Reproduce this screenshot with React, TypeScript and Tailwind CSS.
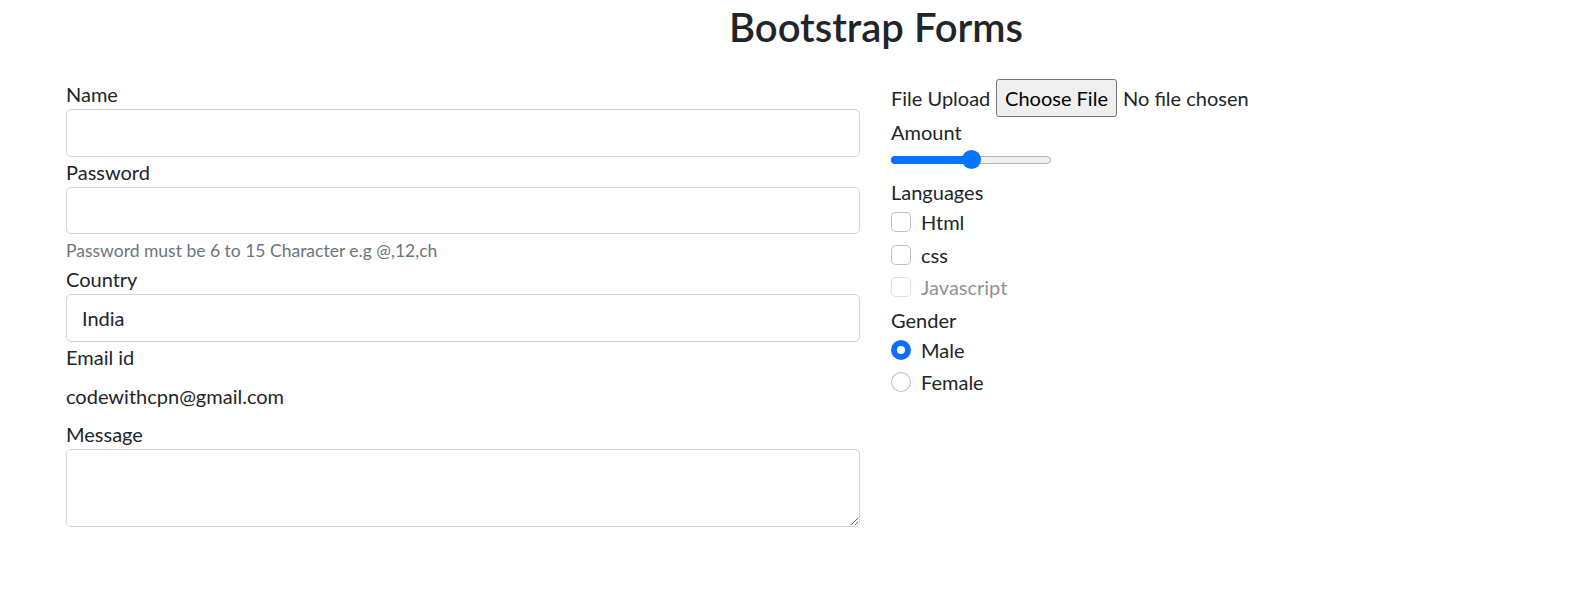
import React from "react";

function Checkbox({ label, disabled }: { label: string; disabled?: boolean }) {
  return (
    <div className={`flex h-[32.5px] ${disabled ? "opacity-50" : ""}`}>
      <div className="mt-[5px] h-[20px] w-[20px] shrink-0 rounded-[5px] border border-[rgba(0,0,0,0.25)] bg-white" />
      <span className="ml-[10px] h-[30px]">{label}</span>
    </div>
  );
}

function Radio({ label, checked }: { label: string; checked?: boolean }) {
  return (
    <div className="flex h-[32.5px]">
      {checked ? (
        <div className="mt-[5px] flex h-[20px] w-[20px] shrink-0 items-center justify-center rounded-full bg-[#0d6efd]">
          <div className="h-[8px] w-[8px] rounded-full bg-white" />
        </div>
      ) : (
        <div className="mt-[5px] h-[20px] w-[20px] shrink-0 rounded-full border border-[rgba(0,0,0,0.25)] bg-white" />
      )}
      <span className="ml-[10px] h-[30px]">{label}</span>
    </div>
  );
}

export default function App() {
  return (
    <div className="h-[612px] w-[1577px] overflow-hidden bg-white font-['Lato','Open_Sans',sans-serif] text-[20px] leading-[30px] text-[#212529]">
      <h2 className="pb-[28px] pl-[175px] pt-[3px] text-center text-[40px] font-semibold leading-[48px]">
        Bootstrap Forms
      </h2>
      <div className="flex gap-[31px] pl-[66px]">
        {/* Left column */}
        <div className="flex w-[794px] flex-col">
          <label className="block h-[30px]">Name</label>
          <input
            type="text"
            className="block h-[48px] w-full rounded-[5px] border border-[#ced4da] bg-white px-[15px] outline-none"
          />
          <label className="block h-[30px]">Password</label>
          <input
            type="password"
            className="block h-[47px] w-full rounded-[5px] border border-[#ced4da] bg-white px-[15px] outline-none"
          />
          <div className="mt-[4px] h-[26px] text-[17.5px] leading-[26px] text-[#6c757d]">
            Password must be 6 to 15 Character e.g @,12,ch
          </div>
          <label className="block h-[30px]">Country</label>
          <div className="flex h-[48px] w-full items-center rounded-[5px] border border-[#ced4da] bg-white px-[15px]">
            India
          </div>
          <label className="block h-[30px]">Email id</label>
          <div className="h-[47px] pt-[9px]">codewithcpn@gmail.com</div>
          <label className="block h-[30px]">Message</label>
          <textarea
            rows={2}
            className="block h-[78px] w-full rounded-[5px] border border-[#ced4da] bg-white px-[15px] py-[7px] outline-none"
          />
        </div>

        {/* Right column */}
        <div className="flex w-[400px] flex-col">
          <div className="flex h-[38px] items-center">
            <span className="w-[105px] shrink-0">File Upload</span>
            <button
              type="button"
              className="flex h-[38px] w-[121px] items-center justify-center rounded-[3px] border border-[#767676] bg-[#efefef] text-[20px] text-[#000000]"
            >
              Choose File
            </button>
            <span className="ml-[6px]">No file chosen</span>
          </div>
          <label className="block h-[30px]">Amount</label>
          <div className="relative mt-[3px] h-[20px] w-[160px]">
            <div className="absolute left-0 right-0 top-[6px] h-[8px] rounded-full border border-[#b2b2b2] bg-[#efefef]" />
            <div className="absolute left-0 top-[6px] h-[8px] w-[80px] rounded-l-full bg-[#0075ff]" />
            <div className="absolute left-[71px] top-0 h-[19px] w-[19px] rounded-full bg-[#0075ff]" />
          </div>
          <label className="mt-[7px] block h-[30px]">Languages</label>
          <Checkbox label="Html" />
          <Checkbox label="css" />
          <Checkbox label="Javascript" disabled />
          <label className="block h-[30px]">Gender</label>
          <Radio label="Male" checked />
          <Radio label="Female" />
        </div>
      </div>
    </div>
  );
}
